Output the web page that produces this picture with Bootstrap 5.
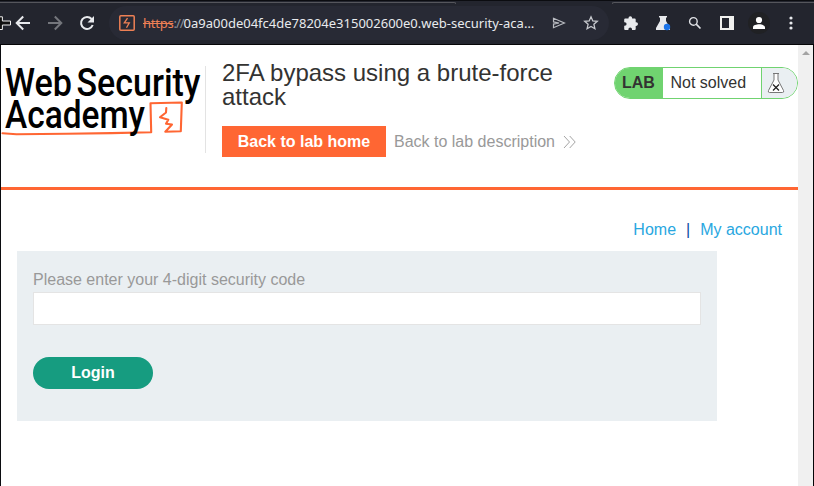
<!DOCTYPE html>
<html lang="en">
<head>
<meta charset="utf-8">
<meta name="viewport" content="width=device-width, initial-scale=1">
<title>2FA bypass using a brute-force attack</title>
<link href="https://cdn.jsdelivr.net/npm/bootstrap@5.3.0/dist/css/bootstrap.min.css" rel="stylesheet">
<style>
body{font-family:"Liberation Sans",Arial,sans-serif;font-size:16px;line-height:1.2;color:#333332;height:486px}
svg{display:block;flex:none}
.toolbar{height:45px;background:#23252e;border-top:1px solid #0b0c10;border-bottom:1px solid #050507;padding:1px 0 0 7px}
.tab-edge{top:1px;height:2px;border:0 solid #55565c;border-top-width:1px}
.tab-edge-l{left:0;width:456px;border-right-width:1px;border-radius:0 2px 0 0}
.tab-edge-r{left:612px;width:202px;border-left-width:1px;border-radius:2px 0 0 0}
.tool{width:32px;height:34px;flex:none;display:flex;align-items:center;justify-content:center}
.omnibox{width:500px;height:34px;background:#282a35;border-radius:17px;margin:0 6px;padding-left:10px;padding-right:2px;font:13px/18px "Noto Sans",sans-serif;color:#e8eaed}
.address{margin-left:8px;width:400px;flex:none;white-space:nowrap}
.scheme{color:#ee8055;text-decoration:line-through;letter-spacing:-.25px}
.slashes{color:#8b8e96;letter-spacing:-1px}
.edge-cursor{left:0;top:15px}
.viewport{height:441px;border-left:1px solid #0b0c10;border-right:1px solid #050507}
.scrollbar{width:15px;background:#f0f0f0;padding-top:6px}
.lab-header{height:145px;border-bottom:3px solid #ff6633}
.logo-cell{width:205px;height:87px;margin-top:21px;border-right:1px solid #e3e3e3}
.lab-title{font-size:24px;line-height:24px;color:#333332;margin:16px 0 17px}
.btn-lab{background:#ff6633;color:#fff;font-weight:700;border:0;border-radius:0;height:31px;width:164px;flex:none;padding:0;line-height:31px}
.muted-link{color:#999;white-space:nowrap}
.status{width:184px;height:32px;margin-top:22px;border:1px solid #70d370;border-radius:16px;overflow:hidden}
.status-lab{width:48px;background:#70d370;font-weight:700;padding-left:7px}
.status-text{width:98px;padding-left:7.5px;background:#fff}
.status-icon{background:#eaeff2;border-left:1px solid #70d370}
.site-nav{padding:30px 16px 0 0;height:61px;line-height:19px;color:#0b4fa0}
.site-nav a{color:#29a7df}
.divider{padding:0 10px}
.login-panel{width:700px;height:170px;margin-left:16px;padding:19px 16px;background:#eaeff2}
.login-panel label{color:#999;line-height:19px;margin-bottom:3px}
.login-panel .form-control{height:33px;border:1px solid #e4e4e4;border-radius:0}
.btn-login{width:120px;height:32px;margin-top:32px;background:#169c80;color:#fff;font-weight:700;padding:0;border:0;border-radius:16px;line-height:32px}
</style>
<script src="https://cdn.jsdelivr.net/npm/bootstrap@5.3.0/dist/js/bootstrap.bundle.min.js"></script>
</head>
<body class="overflow-hidden bg-white">
<header class="toolbar d-flex align-items-center position-relative">
  <span class="tab-edge tab-edge-l position-absolute"></span>
  <span class="tab-edge tab-edge-r position-absolute"></span>
  <svg class="edge-cursor position-absolute" width="12" height="15" viewBox="0 0 12 15"><path d="M0 .8H2.400V5H10.500V9H2.400V13.500H0" fill="#111" stroke="#eee" stroke-width="1"/></svg>
  <span class="tool"><svg width="16" height="16" viewBox="0 0 16 16" fill="none" stroke="#e8eaed" stroke-width="2"><path d="M15 8H2.500M8.200 1.500L1.700 8l6.500 6.500"/></svg></span>
  <span class="tool"><svg width="16" height="16" viewBox="0 0 16 16" fill="none" stroke="#74767c" stroke-width="2"><path d="M1 8h12.500M7.800 1.500L14.300 8l-6.500 6.500"/></svg></span>
  <span class="tool"><svg width="16" height="16" viewBox="0 0 16 16"><path d="M13.700 10A6 6 0 1 1 12.600 4" fill="none" stroke="#e8eaed" stroke-width="2"/><path d="M15 1v6.500H8.500z" fill="#e8eaed"/></svg></span>
  <div class="omnibox d-flex align-items-center">
    <svg width="16" height="16" viewBox="0 0 16 16" fill="none" stroke="#ee8055"><rect x=".8" y=".8" width="14.400" height="14.400" rx="1" stroke-width="1.500"/><path d="M8.500 3.200L5.300 7.800h5L7.500 12.800" stroke-width="1.300"/></svg>
    <div class="address"><span class="scheme">https</span><span class="slashes">://</span>0a9a00de04fc4de78204e315002600e0.web-security-aca…</div>
    <span class="tool"><svg width="14" height="12" viewBox="0 0 14 12" fill="none" stroke="#b9bbc1" stroke-width="1.200"><path d="M1.500 1.300L12.400 6 1.500 10.700V7.100L7 6 1.500 4.900z"/></svg></span>
    <span class="tool"><svg width="16" height="16" viewBox="0 0 16 16" fill="none" stroke="#c7c9ce" stroke-width="1.300"><path d="M8 1.800l1.800 4.100 4.500.4-3.400 3 1 4.400L8 11.400l-3.900 2.300 1-4.400-3.400-3 4.500-.4z"/></svg></span>
  </div>
  <span class="tool"><svg width="16" height="16" viewBox="0 0 16 16" fill="#e8eaed"><path d="M2.200 3.600h3.300V3a1.800 1.800 0 0 1 3.600 0v.6h2.600q1 0 1 1v2.700h.5a1.800 1.800 0 0 1 0 3.600h-.5V14q0 1-1 1H9v-.8a1.800 1.800 0 0 0-3.600 0v.8H2.200q-1 0-1-1v-3.200h.6a1.800 1.800 0 0 0 0-3.600h-.6V4.600q0-1 1-1z"/></svg></span>
  <span class="tool"><svg width="16" height="16" viewBox="0 0 16 16"><path d="M4 1h8v1.500h-1V6l4 7v2H1v-2l4-7V2.500H4z" fill="#e8eaed"/><circle cx="12" cy="12" r="3.200" fill="#1a73e8"/></svg></span>
  <span class="tool"><svg width="14" height="14" viewBox="0 0 14 14" fill="none" stroke="#dfe1e5"><circle cx="5.400" cy="5.400" r="3.800" stroke-width="1.400"/><path d="M8.200 8.200l4.300 4.300" stroke-width="1.700"/></svg></span>
  <span class="tool"><svg width="14" height="14" viewBox="0 0 14 14"><path d="M0 0h14v14H0zM2 2v10h7V2z" fill="#f1f1ef" fill-rule="evenodd"/></svg></span>
  <span class="tool"><svg width="22" height="22" viewBox="0 0 22 22"><circle cx="11" cy="11" r="11" fill="#202124"/><circle cx="11" cy="8" r="3.100" fill="#fff"/><path d="M5 17v-1.800C5 13.200 8.600 12.300 11 12.300s6 .9 6 2.900V17z" fill="#fff"/></svg></span>
  <span class="tool"><svg width="4" height="14" viewBox="0 0 4 14" fill="#e8eaed"><circle cx="2" cy="2" r="1.600"/><circle cx="2" cy="7" r="1.600"/><circle cx="2" cy="12" r="1.600"/></svg></span>
</header>
<div class="viewport d-flex">
  <main class="flex-grow-1">
    <section class="lab-header d-flex">
      <div class="logo-cell flex-shrink-0">
        <svg class="overflow-visible" width="204" height="74" viewBox="1 66 204 74" role="img" aria-label="Web Security Academy">
          <g fill="none" stroke="#ff6633" stroke-linejoin="round" stroke-linecap="round" stroke-width="2.100">
            <path d="M2.500 133.300l14 .9 50-.4 45-.7 39.700-.9-.7-29 31.300-.7-1 28.700-15.500.5 6.700-7.200-6-.8 2.300-4-8.300-2.400 6-4.800.3-4.500"/>
          </g>
          <g font-family="Roboto, sans-serif" font-weight="500" font-size="38" fill="#000">
            <text x="5" y="95.500" textLength="67" lengthAdjust="spacingAndGlyphs">Web</text>
            <text x="76.500" y="95.500" textLength="124" lengthAdjust="spacingAndGlyphs">Security</text>
            <text x="5" y="128" textLength="140" lengthAdjust="spacingAndGlyphs">Academy</text>
          </g>
        </svg>
      </div>
      <div class="flex-grow-1 ps-3 pe-4">
        <h2 class="lab-title fw-normal">2FA bypass using a brute-force attack</h2>
        <div class="d-flex align-items-center">
          <a class="btn btn-lab" href="#">Back to lab home</a>
          <a class="muted-link text-decoration-none d-flex align-items-center ms-2" href="#">Back to lab description
            <svg class="ms-2" width="14" height="14" viewBox="0 0 14 14" fill="none" stroke="#999" stroke-width=".9"><path d="M1 1l5.500 6L1 13M6.700 1l5.500 6-5.500 6"/></svg></a>
        </div>
      </div>
      <div class="status d-flex flex-shrink-0">
        <div class="status-lab d-flex align-items-center">LAB</div>
        <div class="status-text d-flex align-items-center">Not solved</div>
        <div class="status-icon flex-grow-1 d-flex align-items-center ps-1">
          <svg width="20" height="22" viewBox="0 0 20 22" fill="none"><path d="M7 1.500h6M8 2v6L2.500 18.500q-.8 2 1 2h13q1.800 0 1-2L12 8V2" stroke="#777" fill="#fff"/><path d="M7 12.500l6 6M13 12.500l-6 6" stroke="#222" stroke-width="1.300"/></svg>
        </div>
      </div>
    </section>
    <nav class="site-nav d-flex justify-content-end"><a class="text-decoration-none" href="#">Home</a><span class="divider">|</span><a class="text-decoration-none" href="#">My account</a></nav>
    <form class="login-panel">
      <label class="d-block" for="code">Please enter your 4-digit security code</label>
      <input class="form-control" id="code" type="text">
      <button class="btn btn-login d-block" type="button">Login</button>
    </form>
  </main>
  <div class="scrollbar flex-shrink-0 d-flex justify-content-center"><svg width="8" height="4" viewBox="0 0 8 4"><path d="M4 0l4 4H0z" fill="#a3a3a3"/></svg></div>
</div>
</body>
</html>
